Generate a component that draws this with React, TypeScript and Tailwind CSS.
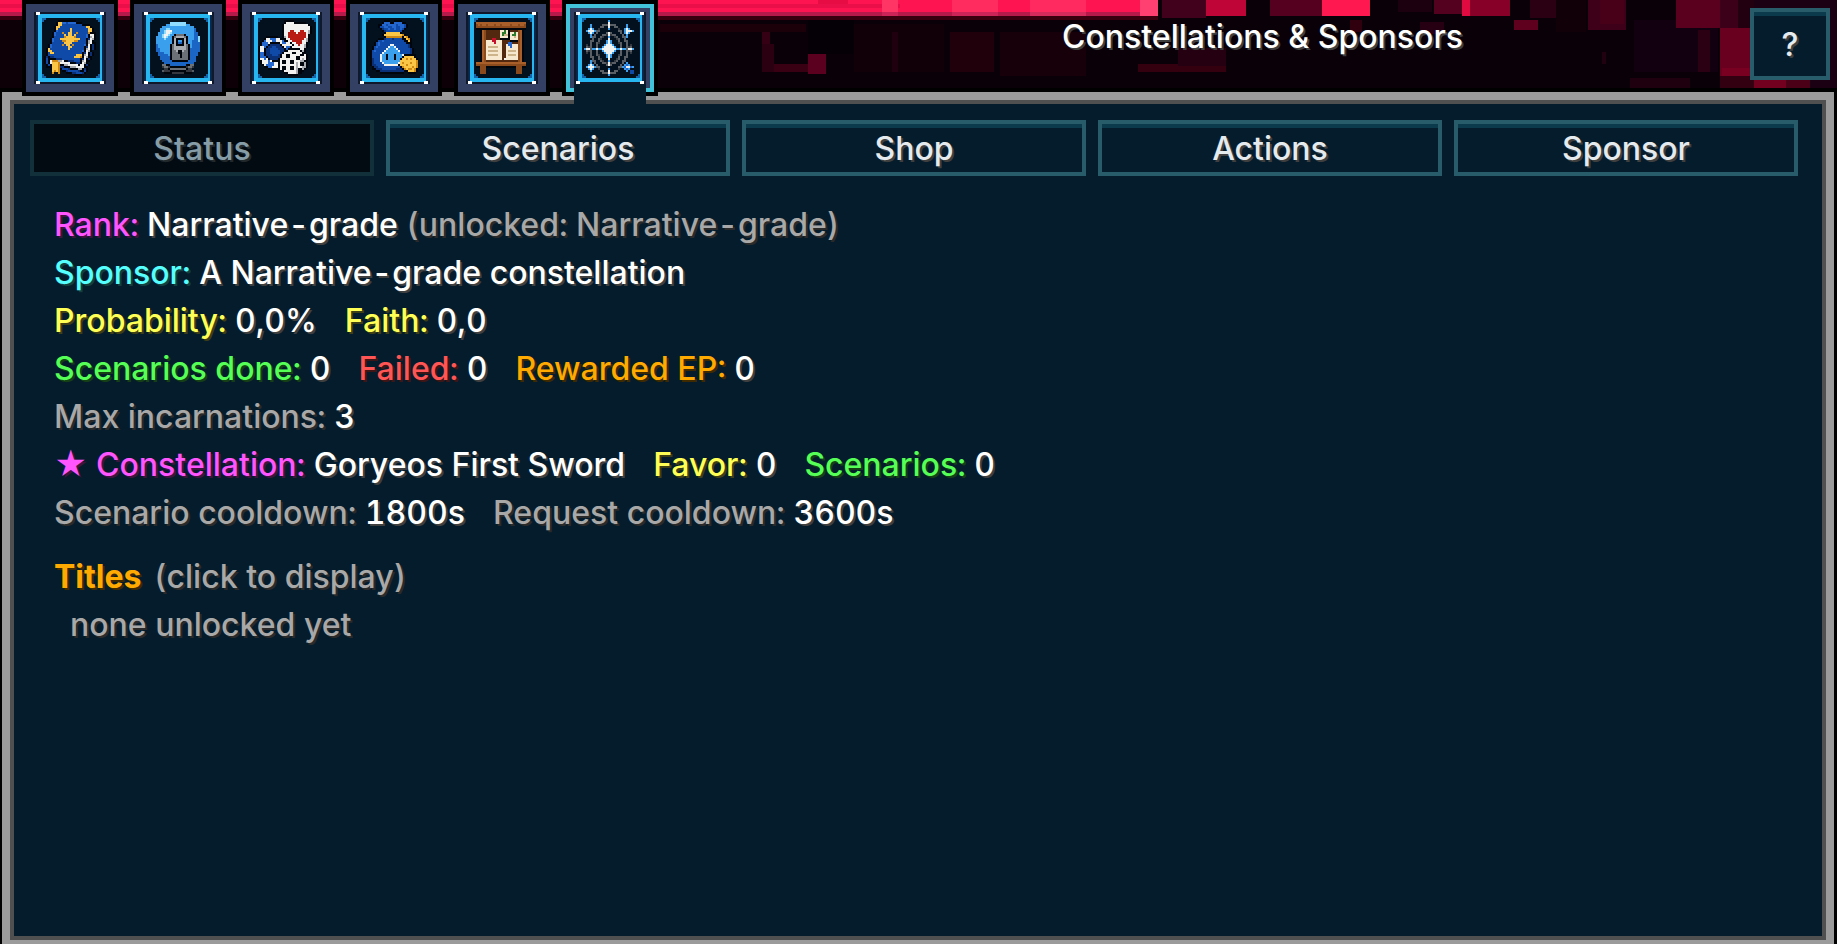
import { useState } from "react";

// One character per pixel, "." and " " stay transparent.
const palette: Record<string, string> = {
  k: "#01060d",
  B: "#0f4aa8",
  b: "#0a3177",
  L: "#2468cf",
  y: "#fbc645",
  o: "#d08a14",
  w: "#f2f2f0",
  g: "#a9adb2",
  G: "#6c7177",
  D: "#35393f",
  S: "#8fdcff",
  s: "#3aa0ee",
  d: "#1b66c4",
  r: "#b91c14",
  n: "#8a4a1c",
  N: "#a85f2a",
  m: "#52290f",
  p: "#f6e9cf",
  P: "#cdb48a",
  R: "#c8102e",
  e: "#2c7a2c",
  t: "#5a5f66",
  T: "#34383f",
};

const bookArt = [
  "........kkkkkkkkk",
  ".......kyyLLBLLLLkkk",
  ".......kyyBBBBBBBBBBkkkk",
  "......kyyBBBBBBBBBBBBByyk",
  "......kyBBBBBByBBBBBBBByyk",
  "......kLBBBBBByBBBBBBBByyk",
  ".....kLBBBoBByyBBoBBBBBokkk",
  ".....kLBBBByByyByBBBBBLkwwk",
  ".....kBBBBBoyyyyoBBBBBLkgwk",
  "....kLBBByyyyyyyyyyBBBkbwgk",
  "....kLBBBBooyyyyooBBBBkgwk",
  "....kBBBBBByyyyBBBBBBBkgwkk",
  "...kLBBBBBoByyBoBBBBBLkwkbk",
  "...kLBBBBBBBByyBBBBBBkbwkbk",
  "..kyBBBBBBBBByBBBBBBBkgwkbk",
  "..kyyBBBBBBBBBBBBBBBLkwgk",
  "..kByyBBBBBBBBBBBBBBkbwkbk",
  "..kBBBBBBBBBBBBBByyykgwkbk",
  ".kbkbbBBBBBBBBBByyyokwgkk",
  ".kBkkkkbbbBBBBBBBBBkbwkbk",
  ".kBkwoooggwkkbbbBBBkgwkk",
  ".kBkwyyyowwwwwkkkbbkwgk",
  "..kBkyyyokkggwwwwwkwwkbk",
  "..kkkyyyobbkkkgggwwwwkk",
  "....kyyyokBBBbkkkkggkbk",
  ".....yoyo.kkbBBBBBbkkBk",
  ".....o..o...kkkbbBBBbk",
  "................kkkk",
];

const orbArt = [
  "",
  "..........SSSSSSSS",
  "........ssSSSSSSSSss",
  "......ssssssssssssssss",
  ".....sssSSssssssssssssd",
  ".....ssSwwwsssssssssssd",
  "....sssSwwSsssssssssssdd",
  "....ssSwwSsskGGGGkssssdd",
  "...sssSwSsskGggggGksssddS",
  "...ssssSssskgkkkkgksssddS",
  "...sssssssskgksskgkssdddS",
  "...sssssssskgkddkgkssdddd",
  "...dsssssskGgkkkkgGksdddd",
  "...dsssssskGggggggGksdddd",
  "...ddssssskGggggggGkddddd",
  "...ddssssskGGgkkgGGkddddd",
  "....dddssskGGGkkGGGkdddd",
  "....dddddskGGGGkGGGkdddd",
  ".....dddddkGGGGkGGGkddd",
  ".....dddddkGGGGGGGGkddd",
  "......dddddkkkkkkkkdddd",
  ".......ddddddddddddddd",
  "......GGkkddddddddkkGG",
  "......DGGDkkkkkkkkDGGD",
  ".......DDkGGGGGGGGkDD",
  "......tDDDkkkkkkkkDDDt",
  ".......kkkkDDDDDDkkkk",
  "",
];

const gamesArt = [
  ".............kkkkk",
  ".............kwwwwkkkkkk",
  "............kwwwwwwwwwwwwk",
  "............kwwwwwwwwwwwwwk",
  "............kwwwwwwwwwwwwwk",
  "............kwwwrrwwwrrwwgk",
  "............kwwrrrrwrrrrwgk",
  "............kwwrrrrrrrrrwk",
  "....kkkkkk..kgwrrrrrrrrrwk",
  "...kwwLLLwwkkkwwrrrrrrrwgk",
  "..kLwwwLLwwwLkkwwrrrrrwwgk",
  ".kLLLwkkkkkwLLwwkwwrrrwwk",
  ".kLLLkbbbbbkwwwwwkwwrwwgk",
  "kwwLkbbBBbbbkwLLkwwwwwwgk",
  "kwwkbbBBBBbbbkLkkkkkkwwk",
  "kwwkbbBBBBBbbkkwwwwwwkgk",
  "kLLkbbBBBBBbkwwwwkkwwwkk",
  "kLLkbbbBBBbkwwkkwwwwwkkwk",
  "kLLLkbbbbbbkwwkkwwwkkwwwk",
  "kwwLwkbbbbkwwwwwwwwkkwgwk",
  ".kwwwLwkkkkwkkwwkkwwwggkk",
  ".kwwwLLLwwkwkkwwkkwgwkkgk",
  "..kwLLLLwwkwwwwwwwwgwkkgk",
  "...kkLLwwwkwkkwwkkwgwwggk",
  ".....kkkkkkwkkwwkkwgkkgk",
  "............kwwwwwwgkkk",
  ".............kkwwwwgkk",
  "...............kkkkk",
];

const bagArt = [
  ".........kkk..kkkk",
  "........kLLLkkLLLLkk",
  "......kkLLBLLLLBLLLBk",
  "......kBBLLBBLLBBLLBk",
  ".......kbBBLBBLBBLBk",
  "........kbBBBBBBBBk",
  ".........kyyyyyyyk",
  "........kyyyyyyyyyok",
  ".........kooooooookyok",
  "......kkkbBBBbBBBBkkyok",
  ".....kBBLBBBBBBBBBBkkyk",
  "....kBLBBBBBBBBBBBBBkkk",
  "....kBLBBBBBwwBBBBBBBbk",
  "...kBLBBBBBwsswBBBBBBbk",
  "...kBBBBBBwsssswBBBBBBbk",
  "..kBLBBBBwsssssswBBBBBbk",
  "..kBBBBBwssssssssBBBBBbk",
  "..kBBBBwsskssskssswkkkkkk",
  "..kBBBBwsskssskssskyyyyyk",
  "..kbBBBwssksssksskyyoyoyyk",
  "..kbBBBwsssssssssyyyyyyyyo",
  "..kbBBBBwssssssswyoyyyoyyo",
  "..kbbBBBBwwwwwwwkyyyoyyyyo",
  "...kbbBBBBBBBBBBBkoyyyyoyo",
  "...kkbbbBBBBBBBbbbkoyooyok",
  ".....kkbbbbbbbbbbbbkkyyyok",
  ".......kkkkkkkkkkkk..kkkk",
  "",
];

const boardArt = [
  "",
  ".NNNNNNNNNNNNNNNNNNNNNNNNN",
  ".nNnNNnNNNnNNnNNNNnNNNnNNn",
  ".nnnnnnnnnnnnnnnnnnnnnnnnn",
  ".kkkkkkkkkkkkkkkkkkkkkkkkk",
  "...kNnmmmmmmmppepkmmmmnNk",
  "...kNnmmmmmmmpeepkppepnNk",
  "...kNnmmmmmmmpePPkpeepnNk",
  "...kNnmmmmmmmppppkppPpnNk",
  "...kNnmmmRRmmkkkkkppppnNk",
  "...kNnpppRRpppmmmmkkkknNk",
  "...kNnppppRpppmmmLLmmmnNk",
  "...kNnppppppppmmpLLpppnNk",
  "...kNnpPPPPPppmmppLpppnNk",
  "...kNnppppppppmmppppppnNk",
  "...kNnpPPPPPppmmpPPPPpnNk",
  "...kNnppppppppmmppppppnNk",
  "...kNnpPPPPPppmmpPPPPpnNk",
  "...kNnppppppppmmppppppnNk",
  "...kNnppppppppmwppppppnNk",
  "...kNnmmmmmmmmmmmmmmmmnNk",
  ".NNNNNNNNNNNNNNNNNNNNNNNNN",
  ".nnnnnnnnnnnnnnnnnnnnnnnnn",
  ".kknnnkkkkkkkkkkkkkkknnnkk",
  "...nnn...............nnn",
  "...nnn...............nnn",
  "...nnn...............nnn",
  "",
];

const starsArt = [
  ".............s",
  ".............w",
  "....s.....tttwttt.....s",
  "....s....tt..w..tt....s",
  "...sws..T....s....T..sws",
  "..swwwstt.........tt.swwws",
  "...sws.t....twt....t.sws",
  "....s.t...ttTwTtt...t.s",
  "....stt..tT..s..Tt..tts",
  ".....t..tT...w...Tt..t",
  "....tt..t...sws...t..tt",
  "....t..tT...sws...Tt..t",
  "..T.t..t...swwws...t..t.T",
  "..tTt..t..swwwwws..t..tTt",
  ".swwtsswsswwwwwwwsswsstwws",
  "..tTt..t..swwwwws..t..tTt",
  "..T.t..t...swwws...t..t.T",
  "....t..tT...sws...Tt..t",
  "....tt..t...sws...t..tt",
  ".....t..tT...w...Tt..t",
  "....stt..tT..s..Tt..tt",
  "....s.t...ttTwTtt...t.s",
  "...sws.t....twt....t.sLs",
  "..swwwstt.........ttsLwwLs",
  "...sws..T....s....T..sLs",
  "....s....tt..w..tt....s.BB",
  "..........tttwttt.......BB",
  ".............s",
];

type PixelIconProps = { art: string[] };

function PixelIcon({ art }: PixelIconProps) {
  return (
    <svg
      viewBox="0 0 36 36"
      className="block size-[72px]"
      shapeRendering="crispEdges"
      aria-hidden
    >
      <rect width="36" height="36" fill="#10182c" />
      <rect x="1" y="1" width="34" height="34" fill="#06264a" />
      <rect x="2" y="1" width="32" height="34" fill="#27b6f0" />
      <rect x="4" y="3" width="29" height="30" fill="#03111f" />
      <path d="M4 3h2v1h-1v1h-1zM33 3h-2v1h1v1h1zM4 33h2v-1h-1v-1h-1zM33 33h-2v-1h1v-1h1z" fill="#1462a8" />
      <path d="M1 0h2v1.5h-2zM33 0h2v1.5h-2zM1 34.5h2v1.5h-2zM33 34.5h2v1.5h-2z" fill="#fff" />
      <g transform="translate(4 4)">
        {art.flatMap((row, y) =>
          [...row].map((c, x) =>
            palette[c] ? (
              <rect key={`${x}-${y}`} x={x} y={y} width="1" height="1" fill={palette[c]} />
            ) : null
          )
        )}
      </g>
    </svg>
  );
}

const pages = [
  { label: "Codex", art: bookArt },
  { label: "Locked orb", art: orbArt },
  { label: "Games", art: gamesArt },
  { label: "Economy", art: bagArt },
  { label: "Quest board", art: boardArt },
  { label: "Constellations & Sponsors", art: starsArt },
];

// x, y, width, height, colour
const glitchBlocks: [number, number, number, number, string][] = [
  [0, 0, 1158, 12, "#fd1450"],
  [0, 4, 900, 4, "#ea0f49"],
  [0, 12, 1158, 4, "#b51a4b"],
  [0, 16, 1158, 4, "#3a0010"],
  [0, 20, 660, 68, "#0d0007"],
  [660, 24, 146, 8, "#1c0009"],
  [808, 20, 46, 34, "#040006"],
  [818, 0, 30, 4, "#e80c45"],
  [882, 0, 16, 12, "#ff3566"],
  [882, 12, 16, 4, "#cc2458"],
  [952, 0, 46, 12, "#ff2c60"],
  [952, 12, 46, 4, "#cc2458"],
  [1030, 0, 56, 12, "#ff2a5f"],
  [1030, 12, 56, 4, "#d42a5c"],
  [1140, 0, 18, 16, "#ff4070"],
  [762, 32, 8, 12, "#360014"],
  [762, 44, 12, 28, "#2b0010"],
  [774, 64, 36, 8, "#380012"],
  [808, 54, 18, 20, "#5c001f"],
  [854, 24, 90, 48, "#120009"],
  [892, 32, 6, 40, "#20000f"],
  [950, 32, 44, 40, "#1f000b"],
  [1000, 32, 86, 44, "#17000a"],
  [1138, 64, 88, 8, "#34000f"],
  [1178, 48, 48, 18, "#250010"],
  [1162, 0, 44, 18, "#41001c"],
  [1206, 0, 40, 16, "#bf0438"],
  [1270, 0, 52, 16, "#560020"],
  [1322, 0, 48, 16, "#ff1750"],
  [1350, 20, 12, 12, "#30000f"],
  [1398, 0, 34, 12, "#1c000f"],
  [1434, 0, 28, 14, "#54001f"],
  [1420, 22, 24, 12, "#260012"],
  [1462, 0, 8, 16, "#e00a40"],
  [1470, 0, 40, 16, "#860027"],
  [1514, 20, 24, 10, "#5f001e"],
  [1530, 0, 26, 18, "#2b0012"],
  [1556, 0, 30, 32, "#120009"],
  [1588, 0, 38, 30, "#3d0018"],
  [1600, 0, 24, 24, "#480019"],
  [1602, 52, 4, 12, "#21000f"],
  [1634, 20, 84, 52, "#120010"],
  [1676, 0, 44, 28, "#5a001e"],
  [1720, 0, 18, 28, "#3c0018"],
  [1738, 0, 16, 28, "#23000f"],
  [1698, 30, 12, 42, "#2a0012"],
  [1720, 28, 36, 48, "#690020"],
  [1722, 68, 32, 8, "#7a0022"],
  [1754, 0, 83, 88, "#1a0012"],
  [1630, 78, 60, 10, "#1e000f"],
  [1720, 76, 34, 12, "#330012"],
  [1754, 78, 32, 10, "#74001f"],
  [1786, 78, 24, 10, "#4c0018"],
];

function GlitchBackdrop() {
  return (
    <svg
      viewBox="0 0 1837 88"
      preserveAspectRatio="none"
      shapeRendering="crispEdges"
      className="absolute inset-x-0 top-0 h-[88px] w-full"
      aria-hidden
    >
      <rect width="1837" height="88" fill="#090008" />
      {glitchBlocks.map(([x, y, w, h, fill]) => (
        <rect key={`${x}-${y}-${w}`} x={x} y={y} width={w} height={h} fill={fill} />
      ))}
    </svg>
  );
}

const tones = {
  white: "text-white [text-shadow:2px_2px_0_#3f3f3f]",
  gray: "text-[#a8a8a8] [text-shadow:2px_2px_0_#2a2a2a]",
  pink: "text-[#ff55ff] [text-shadow:2px_2px_0_#3f153f]",
  aqua: "text-[#55ffff] [text-shadow:2px_2px_0_#153f3f]",
  yellow: "text-[#ffff55] [text-shadow:2px_2px_0_#3f3f15]",
  green: "text-[#55ff55] [text-shadow:2px_2px_0_#153f15]",
  red: "text-[#ff5555] [text-shadow:2px_2px_0_#3f1515]",
  gold: "text-[#ffaa00] [text-shadow:2px_2px_0_#3f2a00]",
};

type Tone = keyof typeof tones;
type Stat = { label: string; tone: Tone; value: string; note?: string };

const statLines: Stat[][] = [
  [{ label: "Rank:", tone: "pink", value: "Narrative-grade", note: "(unlocked: Narrative-grade)" }],
  [{ label: "Sponsor:", tone: "aqua", value: "A Narrative-grade constellation" }],
  [
    { label: "Probability:", tone: "yellow", value: "0,0%" },
    { label: "Faith:", tone: "yellow", value: "0,0" },
  ],
  [
    { label: "Scenarios done:", tone: "green", value: "0" },
    { label: "Failed:", tone: "red", value: "0" },
    { label: "Rewarded EP:", tone: "gold", value: "0" },
  ],
  [{ label: "Max incarnations:", tone: "gray", value: "3" }],
  [
    { label: "★ Constellation:", tone: "pink", value: "Goryeos First Sword" },
    { label: "Favor:", tone: "yellow", value: "0" },
    { label: "Scenarios:", tone: "green", value: "0" },
  ],
  [
    { label: "Scenario cooldown:", tone: "gray", value: "1800s" },
    { label: "Request cooldown:", tone: "gray", value: "3600s" },
  ],
];

const sections = ["Status", "Scenarios", "Shop", "Actions", "Sponsor"];

function App() {
  const [section, setSection] = useState("Status");

  return (
    <div className="flex min-h-screen flex-col bg-black font-['Inter',sans-serif] text-[32px] leading-[48px] font-medium tabular-nums">
      <header className="relative flex h-[92px] items-start pr-[7px] pl-[22px]">
        <GlitchBackdrop />
        <nav className="relative z-10 flex gap-3">
          {pages.map((page, i) => {
            const active = i === pages.length - 1;
            return (
              <button key={page.label} aria-label={page.label} className="relative size-24 bg-black p-1">
                <span
                  className={
                    active
                      ? "block border-4 border-[#43c3da] bg-[#333f63] p-1"
                      : "block bg-[#333f63] p-2"
                  }
                >
                  <PixelIcon art={page.art} />
                </span>
                {active && (
                  <span className="absolute top-[84px] left-3 h-5 w-[72px] bg-[#041c2b]" />
                )}
              </button>
            );
          })}
        </nav>
        <h1 className={`relative mt-[13px] mr-[287px] flex-1 text-right whitespace-nowrap ${tones.white}`}>
          Constellations &amp; Sponsors
        </h1>
        <button className="relative mt-2 h-[72px] w-20 border-4 border-[#295c6b] bg-[#041c2b] pt-0.5 text-[#e4eaed] shadow-[inset_0_4px_0_#0a3a4b] [text-shadow:2px_2px_0_#3f3f3f]">
          ?
        </button>
      </header>

      <main className="mr-[3px] ml-[2px] flex flex-1 flex-col border-8 border-b-4 border-[#9b9b9b]">
        <div className="flex-1 border-4 border-[#505050] bg-[#041c2b] pt-4 pr-6 pl-4">
          <nav className="grid grid-cols-5 gap-3">
            {sections.map((name) => (
              <button
                key={name}
                disabled={name === section}
                onClick={() => setSection(name)}
                className="h-14 border-4 border-[#295c6b] pt-0.5 text-[#e4eaed] shadow-[inset_0_4px_0_#0a3a4b] [text-shadow:2px_2px_0_#3f3f3f] disabled:border-[#12303a] disabled:bg-[#010b11] disabled:text-[#869da8] disabled:shadow-none disabled:[text-shadow:2px_2px_0_#22292c]"
              >
                <span className="block leading-10">{name}</span>
              </button>
            ))}
          </nav>

          <section className="px-6 pt-[25px]">
            {statLines.map((line) => (
              <p key={line[0].label} className="flex flex-wrap gap-x-7">
                {line.map((stat) => (
                  <span key={stat.label}>
                    <span className={tones[stat.tone]}>{stat.label}</span>{" "}
                    <span className={tones.white}>{stat.value}</span>
                    {stat.note && <span className={tones.gray}> {stat.note}</span>}
                  </span>
                ))}
              </p>
            ))}
            <p className="mt-4">
              <button>
                <span className={`mr-1 font-bold ${tones.gold}`}>Titles</span>{" "}
                <span className={tones.gray}>(click to display)</span>
              </button>
            </p>
            <p className={`pl-4 ${tones.gray}`}>none unlocked yet</p>
          </section>
        </div>
      </main>
    </div>
  );
}

export default App;
